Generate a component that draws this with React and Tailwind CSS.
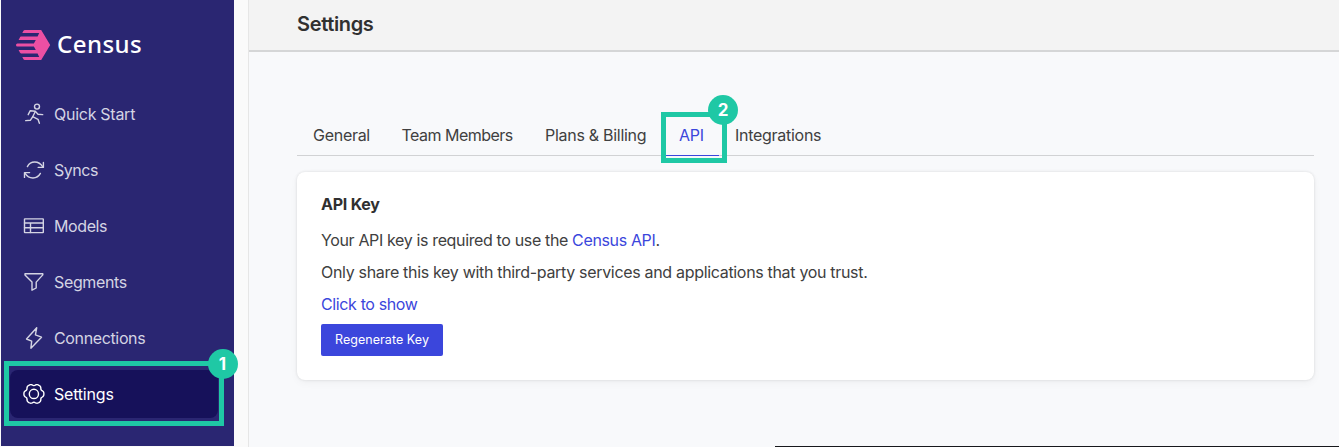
const gearPath =
  Array.from({ length: 72 }, (_, i) => {
    const a = (i * Math.PI) / 36;
    const r = 9.35 + 0.85 * Math.cos(6 * a) - 0.22 * Math.cos(12 * a);
    return `${i ? "L" : "M"}${(10.9 + r * Math.cos(a)).toFixed(2)} ${(10.9 + r * Math.sin(a)).toFixed(2)}`;
  }).join("") + "Z";

const icons = {
  run: (
    <>
      <circle cx="14" cy="3.6" r="2.5" />
      <path d="M5.2 11.7 7.3 7.7 12.3 8.3 15 11.2 19.7 11.6" />
      <path d="M12.2 8.7 9.7 13.7 15 16.3 16.4 20.3" />
      <path d="M9.6 13.8 7.3 17.3 2.7 17.6" />
    </>
  ),
  sync: (
    <>
      <path d="M4.4 7.6C7.5 1.6 15.7 1.4 19.8 7.9" />
      <path d="M20.4 3.5V8.4H15.2" />
      <path d="M17.4 14.4C14.2 20.3 6 20.7 2.1 14.4" />
      <path d="M1.5 18.4V13.6H6.6" />
    </>
  ),
  table: (
    <>
      <rect x="1.5" y="3.9" width="18.8" height="13.7" rx="0.4" />
      <path d="M1.5 8H20.3M1.5 12.7H20.3M7.5 8V17.6" />
    </>
  ),
  filter: <path d="M2 2.7H19.8V3.9L13.2 11.1V17L9 19.2V11.1L2 3.9Z" />,
  bolt: <path d="M13.7 0.8 3.5 12 8.7 14.2 7.9 21.2 18.5 10.2 12.4 7.9Z" />,
  gear: (
    <>
      <circle cx="10.9" cy="10.9" r="4.6" />
      <path d={gearPath} />
    </>
  ),
};

const nav = [
  ["run", "Quick Start", "tracking-[-0.27px]"],
  ["sync", "Syncs", "tracking-[-0.45px]"],
  ["table", "Models", "tracking-[-0.4px]"],
  ["filter", "Segments", "tracking-[-0.35px]"],
  ["bolt", "Connections", "tracking-[-0.36px]"],
  ["gear", "Settings", "tracking-[-0.2px]"],
];

const tabs = [
  ["General", "w-[88.5px]"],
  ["Team Members", "w-[143.5px]"],
  ["Plans & Billing", "w-[134px]"],
  ["API", "w-14"],
  ["Integrations", "w-[120px]"],
];

function Logo() {
  return (
    <svg width="35" height="30" viewBox="0 0 35 30" fill="#ec4fa3" className="shrink-0">
      <path d="M8.7 0H25.2L34.2 15 25.2 30H8.7Q8 30 7.5 29.2L6.3 27H23.2L21.6 23.4H5Q4.3 23.4 3.9 22.6L2.6 20.1H19.8L17.9 16.6H1.4Q0 16.6 0 15T1.4 13.4H17.9L19.8 9.9H2.6L3.9 7.4Q4.3 6.6 5 6.6H21.6L23.2 3H6.3L7.5.8Q8 0 8.7 0Z" />
    </svg>
  );
}

function Badge({ children, className }) {
  return (
    <div className={`absolute flex size-[30px] items-center justify-center rounded-full bg-[#1fc8a5] font-['Inter'] text-[17px] leading-none font-bold text-white ${className}`}>
      {children}
    </div>
  );
}

function Sidebar() {
  return (
    <aside className="ml-px h-[446px] w-[233px] shrink-0 bg-[#2a2672]">
      <div className="flex h-[90px] items-center pb-px pl-[15px]">
        <Logo />
        <span className="mt-[-1px] ml-[6px] font-['Noto_Sans',sans-serif] text-[24px] leading-[30px] font-medium tracking-[0.45px] text-white">Census</span>
      </div>
      <nav className="flex flex-col gap-2 pl-[9px]">
        {nav.map(([icon, label, tracking]) => (
          <a
            key={label}
            className={`relative flex h-12 w-[208px] items-center gap-[9px] rounded-lg pl-[13px] ${label === "Settings" ? "bg-[#16115a] text-white" : "text-[#d4d4e3]"}`}
          >
            <svg width="22" height="22" viewBox="0 0 22 22" fill="none" stroke="currentColor" strokeWidth="1.4" strokeLinejoin="round" strokeLinecap="round">
              {icons[icon]}
            </svg>
            <span className={`whitespace-nowrap ${tracking}`}>{label}</span>
            {label === "Settings" && (
              <>
                <div className="absolute top-[-9px] left-[-6px] h-[65px] w-[220px] border-5 border-[#1fc8a5]" />
                <Badge className="top-[-21px] left-[197.5px]">1</Badge>
              </>
            )}
          </a>
        ))}
      </nav>
    </aside>
  );
}

export default function App() {
  return (
    <div className="relative flex h-[447px] w-[1339px] overflow-hidden bg-[#fafafa] font-['Inter',sans-serif] text-[16px] leading-6 text-[#404040]">
      <Sidebar />
      <main className="ml-[14px] flex-1 border-l border-[#e6e6e6] bg-[#f8f9fb]">
        <header className="flex h-[52px] items-center border-b-2 border-[#d5d6d7] bg-[#f3f3f3] pb-[2px] pl-12 text-[20px] font-semibold tracking-[-0.35px] text-[#303030]">
          Settings
        </header>
        <div className="pt-[63px] pr-[25px] pl-12">
          <div className="flex h-[41px] border-b border-[#d1d2d4]">
            {tabs.map(([label, width]) => (
              <div
                key={label}
                className={`relative h-[41px] shrink-0 px-4 pt-2 whitespace-nowrap ${width} ${label === "Team Members" ? "tracking-[-0.52px]" : "tracking-[-0.28px]"} ${label === "API" ? "border-b border-[#3b46dc] text-[#3b46dc]" : ""}`}
              >
                {label}
                {label === "API" && (
                  <>
                    <div className="absolute top-[-3px] left-[-2px] h-[51px] w-[66px] border-5 border-[#1fc8a5]" />
                    <Badge className="top-[-20px] left-[45px]">2</Badge>
                  </>
                )}
              </div>
            ))}
          </div>
          <section className="mt-4 h-52 rounded-lg bg-white px-6 pt-5 tracking-[-0.32px] shadow-[0_0_3px_rgba(0,0,0,0.12),0_3px_8px_rgba(0,0,0,0.04)]">
            <h2 className="font-bold tracking-[-0.24px] text-[#303030]">API Key</h2>
            <p className="mt-3 tracking-[-0.36px]">
              Your API key is required to use the <a className="text-[#3b46dc]">Census API</a>.
            </p>
            <p className="mt-2">Only share this key with third-party services and applications that you trust.</p>
            <a className="mt-2 block tracking-[-0.37px] text-[#3b46dc]">Click to show</a>
            <button className="mt-2 flex h-8 w-[122px] items-center justify-center rounded-[2px] bg-[#3b46dc] text-[12.5px] tracking-[0.05px] text-white">
              Regenerate Key
            </button>
          </section>
        </div>
      </main>
      <div className="absolute right-0 bottom-0 h-px w-[564px] bg-[#17181c]" />
    </div>
  );
}
